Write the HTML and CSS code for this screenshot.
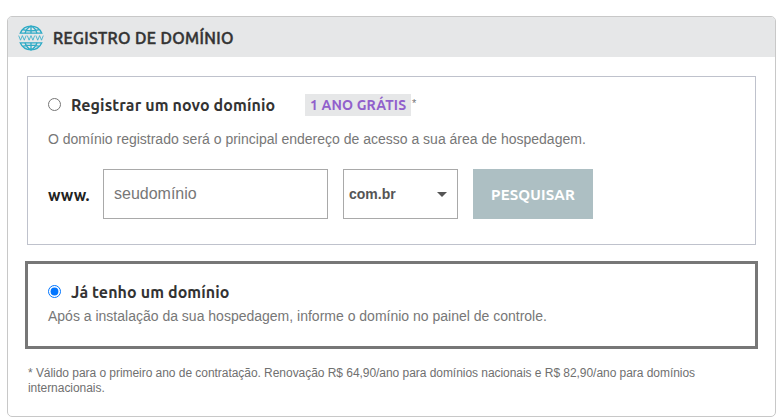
FILE: index.html
```html
<!DOCTYPE html>
<html lang="pt-BR">
<head>
<meta charset="utf-8">
<title>Registro de domínio</title>
<link rel="stylesheet" href="styles.css">
</head>
<body>
<main class="card">
  <header class="card-header">
    <svg class="globe" viewBox="0 0 26 26" fill="none" stroke="#2fabc6" stroke-width="1.3">
      <path d="M2.2 8.2C4 4 8 1.2 13 1.2S22 4 23.8 8.2ZM2.2 17.8C4 22 8 24.8 13 24.8S22 22 23.8 17.8Z"/>
      <path d="M13 1.2V8.2M13 17.8V24.8M7 8.2C8 5 10 2.5 13 1.2C16 2.5 18 5 19 8.2M7 17.8C8 21 10 23.5 13 24.8C16 23.5 18 21 19 17.8M4.7 4.7Q13 7 21.3 4.7M4.7 21.3Q13 19 21.3 21.3"/>
      <path stroke-width=".8" d="M.7 10.6L2.5 15.2L4.4 10.6L6.3 15.2L8.1 10.6M9.3 10.6L11.1 15.2L13 10.6L14.9 15.2L16.7 10.6M17.9 10.6L19.7 15.2L21.6 10.6L23.5 15.2L25.3 10.6"/>
    </svg>
    <h1 class="card-title">REGISTRO DE DOMÍNIO</h1>
  </header>
  <section class="option">
    <label class="option-label">
      <input class="radio" type="radio" name="dominio">
      <span class="option-title title-new">Registrar um novo domínio</span>
      <span class="badge"><span class="badge-text">1 ANO GRÁTIS</span></span><span class="asterisk">*</span>
    </label>
    <p class="description description-new">O domínio registrado será o principal endereço de acesso a sua área de hospedagem.</p>
    <div class="search">
      <span class="prefix">www.</span>
      <input class="domain" type="text" placeholder="seudomínio">
      <div class="extension"><span>com.br</span><svg class="arrow" viewBox="0 0 10 5"><path fill="#555" d="M0 0H10L5 5Z"/></svg></div>
      <button class="submit" type="button">PESQUISAR</button>
    </div>
  </section>
  <section class="option option-selected">
    <label class="option-label">
      <input class="radio" type="radio" name="dominio" checked>
      <span class="option-title title-own">Já tenho um domínio</span>
    </label>
    <p class="description description-own">Após a instalação da sua hospedagem, informe o domínio no painel de controle.</p>
  </section>
  <p class="note">* Válido para o primeiro ano de contratação. Renovação R$ 64,90/ano para domínios nacionais e R$ 82,90/ano para domínios internacionais.</p>
</main>
</body>
</html>
```
FILE: styles.css
```css
* { box-sizing: border-box; }
body {
  margin: 0;
  padding: 16px 8px 0 7px;
  background: #fff;
  color: #333;
  font-family: "Liberation Sans", Arial, sans-serif;
  overflow: hidden;
}
h1, p { margin: 0; }
.card {
  height: 401px;
  border: 1px solid #c8c8c8;
  border-radius: 5px;
  overflow: hidden;
}
.card-header {
  display: flex;
  align-items: center;
  height: 40px;
  padding-left: 10px;
  background: #e6e7e8;
}
.globe { width: 26px; height: 26px; margin-top: 2px; }
.card-title, .option-title, .badge, .prefix, .submit {
  font-family: Ubuntu, "Noto Sans", "Open Sans", sans-serif;
  white-space: nowrap;
}
.card-title {
  margin: 2px 0 0 9px;
  font-size: 16px;
  font-weight: 500;
  letter-spacing: 0.37px;
  -webkit-text-stroke: 0.5px #333;
}
.option {
  height: 169px;
  margin: 19px 19px 0;
  padding: 17px 20px 0;
  border: 1px solid #bfc2cc;
}
.option-selected {
  height: 88px;
  margin: 16px 17px 0;
  border: 3px solid #777;
}
.option-label { display: flex; align-items: center; height: 22px; }
.radio { width: 13px; height: 13px; margin: -2px 10px 0 0; flex: none; }
.option-title { font-size: 16px; font-weight: 700; line-height: 22px; letter-spacing: 0.1px; }
.title-new { width: 234px; }
.badge {
  width: 106px;
  height: 22px;
  padding-left: 5px;
  background: #e6e7e8;
  color: #9160cc;
  font-size: 14px;
  font-weight: 700;
  line-height: 22px;
  letter-spacing: 0.15px;
}
.asterisk { align-self: flex-start; margin: 3px 0 0 1px; color: #777; font-size: 11px; line-height: 12px; }
.description { color: #777; font-size: 14px; line-height: 20px; white-space: nowrap; }
.description-new { margin-top: 13px; }
.description-own { margin-top: 3px; }
.search { display: flex; align-items: center; height: 50px; margin-top: 20px; }
.prefix { width: 55px; padding-top: 2px; color: #222; font-size: 16px; font-weight: 700; }
.domain {
  width: 225px;
  height: 50px;
  padding: 0 10px;
  border: 1px solid #a9a9a9;
  border-radius: 0;
  font: 16px "Liberation Sans", Arial, sans-serif;
}
.domain::placeholder { color: #777; }
.extension {
  display: flex;
  align-items: center;
  justify-content: space-between;
  width: 115px;
  height: 50px;
  margin: 0 15px;
  padding: 0 10px 0 5px;
  border: 1px solid #a9a9a9;
  color: #555;
  font-size: 14px;
  font-weight: 700;
}
.arrow { width: 10px; height: 5px; }
.submit {
  width: 120px;
  height: 50px;
  padding: 1px 0 0;
  border: 0;
  background: #adbfc3;
  color: #fff;
  font-size: 15px;
  font-weight: 700;
  letter-spacing: 0.15px;
}
.note {
  width: 700px;
  margin: 17px 0 0 20px;
  color: #707070;
  font-size: 12px;
  line-height: 15px;
  letter-spacing: -0.045px;
}
```
